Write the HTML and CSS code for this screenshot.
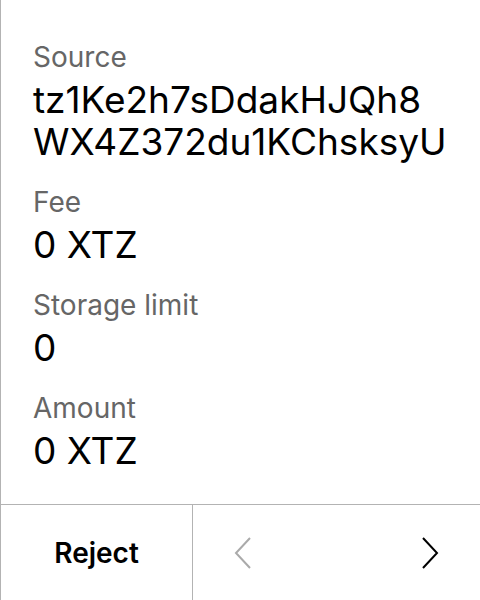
FILE: index.html
```html
<!DOCTYPE html>
<html>
<head>
<meta charset="utf-8">
<link rel="stylesheet" href="styles.css">
</head>
<body>
<div class="screen">
  <div class="details">
    <div class="field">
      <div class="label">Source</div>
      <div class="value">tz1Ke2h7sDdakHJQh8<br>WX4Z372du1KChsksyU</div>
    </div>
    <div class="field">
      <div class="label">Fee</div>
      <div class="value">0 XTZ</div>
    </div>
    <div class="field">
      <div class="label">Storage limit</div>
      <div class="value">0</div>
    </div>
    <div class="field">
      <div class="label">Amount</div>
      <div class="value">0 XTZ</div>
    </div>
  </div>
  <div class="actions">
    <div class="reject">Reject</div>
    <div class="nav">
      <svg class="chev disabled" width="18" height="32" viewBox="0 0 18 32"><path d="M16 1 L2 16 L16 31" fill="none" stroke="currentColor" stroke-width="2"/></svg>
      <svg class="chev" width="18" height="32" viewBox="0 0 18 32"><path d="M2 1 L16 16 L2 31" fill="none" stroke="currentColor" stroke-width="2"/></svg>
    </div>
  </div>
</div>
</body>
</html>
```
FILE: styles.css
```css
html, body {
  margin: 0;
  padding: 0;
  background: #fff;
}
body {
  font-family: Inter, "Noto Sans", sans-serif;
  color: #000;
}
.screen {
  width: 480px;
  height: 600px;
  box-sizing: border-box;
  border-left: 1px solid #b3b3b3;
  display: flex;
  flex-direction: column;
}
.details {
  flex: 1;
  padding: 40px 0 0 32px;
  display: flex;
  flex-direction: column;
  gap: 22px;
}
.label {
  font-size: 28px;
  line-height: 34px;
  color: #666;
}
.value {
  margin-top: 5px;
  font-size: 37px;
  line-height: 42px;
  color: #000;
}
.actions {
  height: 95px;
  border-top: 1px solid #b3b3b3;
  display: grid;
  grid-template-columns: 192px 1fr;
}
.reject {
  border-right: 1px solid #b3b3b3;
  display: flex;
  align-items: center;
  justify-content: center;
  font-size: 28px;
  font-weight: 600;
}
.nav {
  display: flex;
  align-items: center;
  justify-content: space-between;
  padding: 0 41px 0 41px;
}
.chev {
  color: #000;
}
.chev.disabled {
  color: #aaa;
}
```
